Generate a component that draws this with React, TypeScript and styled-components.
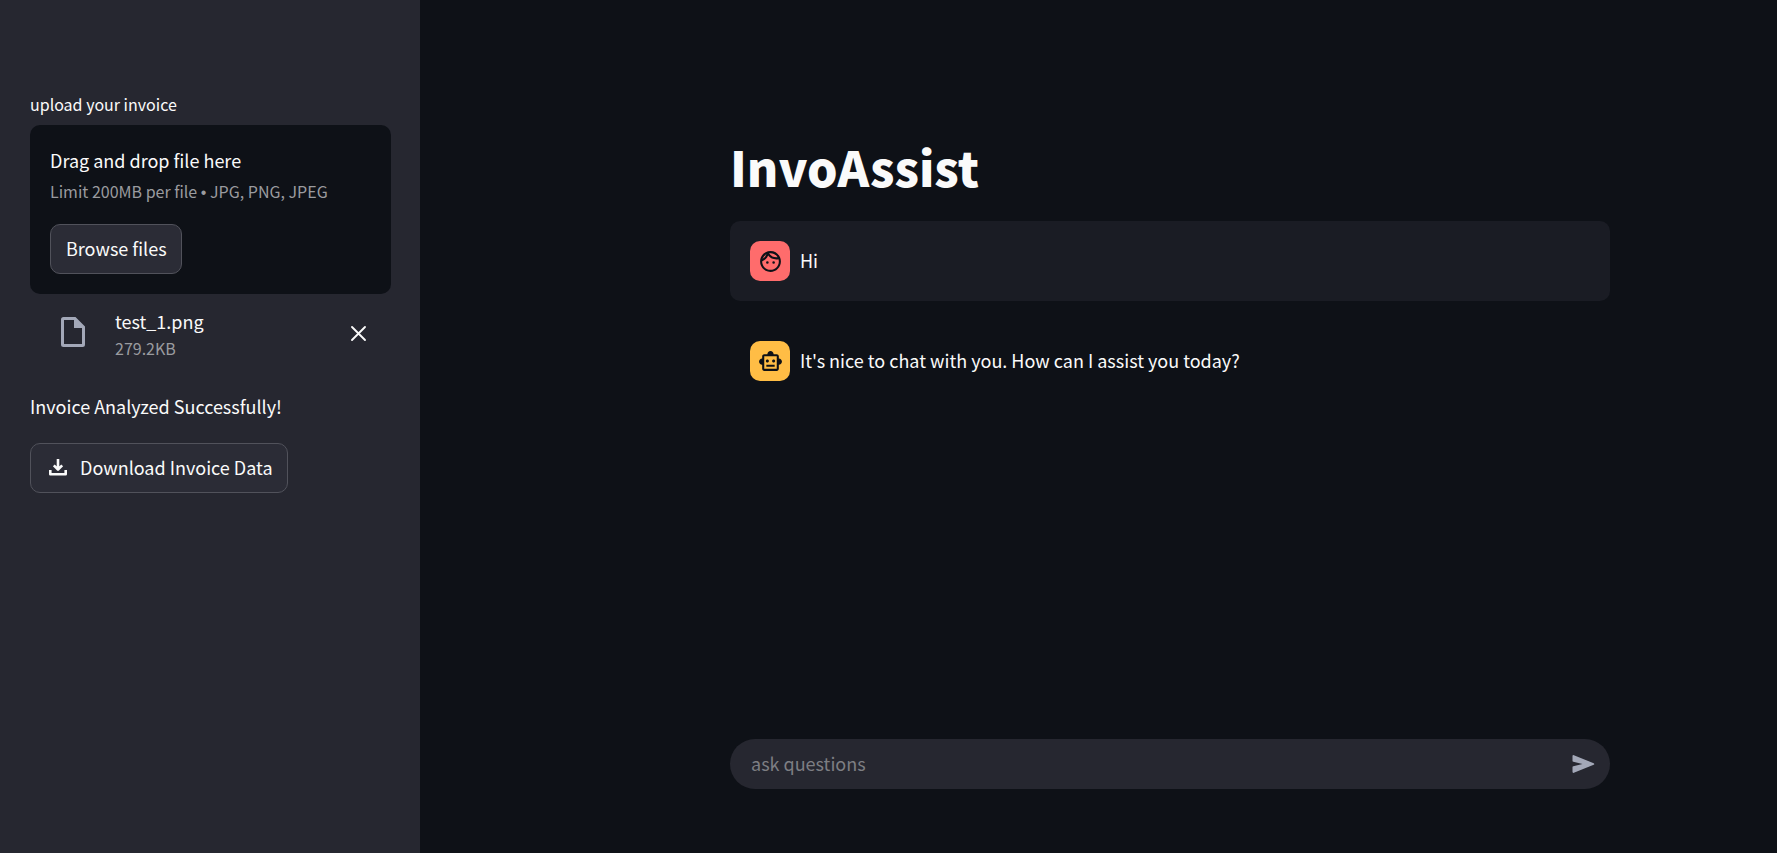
import React from "react";
import styled, { createGlobalStyle } from "styled-components";
import { MdOutlineFace, MdOutlineSmartToy } from "react-icons/md";

const GlobalStyle = createGlobalStyle`
  *, *::before, *::after {
    box-sizing: border-box;
  }

  body {
    margin: 0;
    background: #0e1117;
    color: #fafafa;
    font-family: "Noto Sans CJK SC", "Open Sans", sans-serif;
    font-size: 18px;
    line-height: 32px;
  }

  button, input {
    font: inherit;
    color: inherit;
  }
`;

const Page = styled.div`
  display: flex;
  min-height: 100vh;
`;

const Sidebar = styled.aside`
  flex: 0 0 420px;
  padding: 90px 29px 40px 30px;
  background: #262730;
`;

const FieldLabel = styled.span`
  display: block;
  margin-bottom: 7px;
  font-size: 16px;
  line-height: 28px;
`;

const DropZone = styled.section`
  padding: 19px 20px 20px;
  border-radius: 10px;
  background: #0e1117;
`;

const DropTitle = styled.span`
  display: block;
`;

const Caption = styled.small<{ $lineHeight: number }>`
  display: block;
  font-size: 16px;
  line-height: ${(p) => p.$lineHeight}px;
  color: #9a9b9f;
`;

const Bullet = styled.span`
  font-family: "Liberation Sans", sans-serif;
  line-height: 1;
`;

const OutlineButton = styled.button`
  display: inline-flex;
  align-items: center;
  height: 50px;
  padding: 0 14px 2px 15px;
  border: 1px solid #51525b;
  border-radius: 10px;
  background: #2b2c36;
  cursor: pointer;
`;

const BrowseButton = styled(OutlineButton)`
  margin-top: 18px;
`;

const DownloadButton = styled(OutlineButton)`
  gap: 12px;
  padding: 0 14px 2px 17px;
`;

const FileRow = styled.div`
  display: flex;
  align-items: center;
  margin: 13px 20px 0 26px;
`;

const FileDetails = styled.div`
  flex: 1;
  margin-left: 25px;
`;

const FileName = styled.div`
  line-height: 28px;
`;

const IconButton = styled.button`
  display: grid;
  place-items: center;
  padding: 0;
  border: 0;
  background: transparent;
  cursor: pointer;
`;

const Status = styled.p`
  margin: 29px 0 21px;
`;

const Main = styled.main`
  flex: 1;
  min-width: 0;
  display: flex;
  flex-direction: column;
  align-items: center;
  padding: 130px 20px 64px 163px;
`;

const Column = styled.div`
  flex: 1;
  display: flex;
  flex-direction: column;
  width: 100%;
  max-width: 880px;
`;

const Title = styled.h1`
  margin: 0 0 19px;
  font-size: 48px;
  font-weight: 900;
  line-height: 72px;
`;

const Messages = styled.div`
  display: grid;
  gap: 20px;
`;

const Message = styled.div<{ $filled?: boolean }>`
  display: flex;
  align-items: center;
  gap: 10px;
  padding: 20px;
  border-radius: 10px;
  background: ${(p) => (p.$filled ? "#1a1c24" : "transparent")};
`;

const MessageText = styled.p`
  margin: 0;
  padding-bottom: 2px;
`;

const Avatar = styled.div<{ $color: string }>`
  flex: none;
  display: grid;
  place-items: center;
  width: 40px;
  height: 40px;
  padding: 1px 0 0 1px;
  border-radius: 10px;
  background: ${(p) => p.$color};
  color: #0e1117;
`;

const ChatForm = styled.form`
  display: flex;
  align-items: center;
  height: 50px;
  margin-top: auto;
  padding: 0 12px 0 21px;
  border-radius: 25px;
  background: #262730;
`;

const ChatInput = styled.input`
  flex: 1;
  min-width: 0;
  padding: 0 0 2px;
  border: 0;
  outline: 0;
  background: transparent;

  &::placeholder {
    color: #7d7e83;
    opacity: 1;
  }
`;

const FileIcon = () => (
  <svg width="34" height="34" viewBox="0 1 34 34" aria-hidden="true">
    <path
      fill="#a3a8b8"
      fillRule="evenodd"
      d="M7.500 1H19.500L29 10.500V28.500a2.500 2.500 0 0 1-2.500 2.500h-19A2.500 2.500 0 0 1 5 28.500v-25A2.500 2.500 0 0 1 7.500 1ZM8 4v24h18V12h-8V4Z"
    />
  </svg>
);

const CloseIcon = () => (
  <svg width="24" height="24" viewBox="0 0 24 24" aria-hidden="true">
    <path d="M5 5l13 13M18 5l-13 13" stroke="#fafafa" strokeWidth="1.900" strokeLinecap="round" />
  </svg>
);

const DownloadIcon = () => (
  <svg width="20" height="20" viewBox="0 0 20 20" fill="none" stroke="#fafafa" strokeWidth="2.600" aria-hidden="true">
    <path d="M10 2v10M5.800 8.300l4.200 4.200l4.200-4.200M2.300 13v4.200h15.400v-4.200" strokeLinejoin="round" />
  </svg>
);

const SendIcon = () => (
  <svg width="28" height="28" viewBox="0 0 28 28" aria-hidden="true">
    <path
      fill="#a3a8b8"
      d="M2.500 6.200v4.600q0 .8.800 1L12.500 14l-9.200 2.200q-.8.200-.8 1v4.600q0 1.500 1.400 1l19.800-8q1.200-.8 0-1.600l-19.800-8Q2.500 4.700 2.500 6.200Z"
    />
  </svg>
);

export default function App() {
  return (
    <>
      <GlobalStyle />
      <Page>
        <Sidebar>
          <FieldLabel id="upload-label">upload your invoice</FieldLabel>
          <DropZone aria-labelledby="upload-label">
            <DropTitle>Drag and drop file here</DropTitle>
            <Caption $lineHeight={30}>
              Limit 200MB per file <Bullet>•</Bullet> JPG, PNG, JPEG
            </Caption>
            <BrowseButton type="button">Browse files</BrowseButton>
          </DropZone>
          <FileRow>
            <FileIcon />
            <FileDetails>
              <FileName>test_1.png</FileName>
              <Caption $lineHeight={26}>279.2KB</Caption>
            </FileDetails>
            <IconButton type="button" aria-label="Remove test_1.png">
              <CloseIcon />
            </IconButton>
          </FileRow>
          <Status>Invoice Analyzed Successfully!</Status>
          <DownloadButton type="button">
            <DownloadIcon />
            Download Invoice Data
          </DownloadButton>
        </Sidebar>
        <Main>
          <Column>
            <Title>InvoAssist</Title>
            <Messages>
              <Message $filled>
                <Avatar $color="#ff6c6c">
                  <MdOutlineFace size={25} />
                </Avatar>
                <MessageText>Hi</MessageText>
              </Message>
              <Message>
                <Avatar $color="#ffbd45">
                  <MdOutlineSmartToy size={25} />
                </Avatar>
                <MessageText>It's nice to chat with you. How can I assist you today?</MessageText>
              </Message>
            </Messages>
            <ChatForm onSubmit={(e) => e.preventDefault()}>
              <ChatInput type="text" placeholder="ask questions" aria-label="ask questions" />
              <IconButton type="submit" aria-label="Send">
                <SendIcon />
              </IconButton>
            </ChatForm>
          </Column>
        </Main>
      </Page>
    </>
  );
}
